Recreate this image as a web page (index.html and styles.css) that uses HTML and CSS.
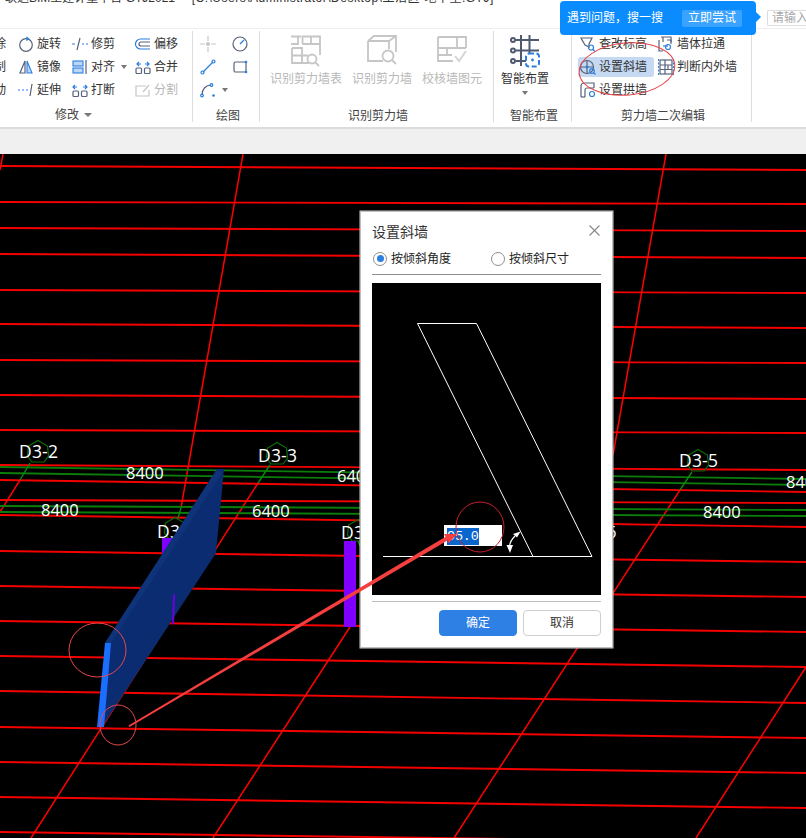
FILE: index.html
```html
<!DOCTYPE html>
<html lang="zh-CN">
<head>
<meta charset="utf-8">
<title>设置斜墙</title>
<link rel="stylesheet" href="styles.css">
</head>
<body>
<div class="page">
  <header class="titlebar">
    <div class="title">广联达BIM土建计量平台 GTJ2021 - <span class="title-path">[C:\Users\Administrator\Desktop\工活区-地下室.GTJ]</span></div>
    <div class="search">请输入</div>
  </header>

  <section class="ribbon">
    <div class="group g-modify">
      <div class="tools tools-modify">
        <div class="tool"><span class="ico"></span>删除</div>
        <div class="tool"><svg class="ico" viewBox="0 0 16 16"><circle class="ink" cx="8" cy="9" r="6.300"/><path class="blue" d="M8 2.800h2M8.500 1l2 1.800-2 1.800"/></svg>旋转</div>
        <div class="tool"><svg class="ico" viewBox="0 0 16 16"><path class="blue" d="M0 8h3M10 8h2M14 8h2"/><path class="ink" d="M5 14L8 2"/></svg>修剪</div>
        <div class="tool"><svg class="ico" viewBox="0 0 16 16"><path class="blue" d="M15 3H5.500a4.500 4.500 0 0 0 0 10H15"/><path class="ink" d="M15 6H6a2 2 0 0 0 0 4h9"/></svg>偏移</div>

        <div class="tool"><span class="ico"></span>复制</div>
        <div class="tool"><svg class="ico" viewBox="0 0 16 16"><path class="ink" d="M7 2L2 14h5z"/><path class="blue-fill" d="M9 2l5 12H9z"/></svg>镜像</div>
        <div class="tool"><svg class="ico" viewBox="0 0 16 16"><rect class="blue-fill" x="1" y="2" width="10" height="5"/><rect class="blue-fill" x="1" y="9" width="10" height="5"/><path class="ink" d="M14 1v14"/></svg>对齐<i class="caret"></i></div>
        <div class="tool"><svg class="ico" viewBox="0 0 16 16"><rect class="ink" x="1" y="9" width="5.500" height="5.500" rx="1"/><rect class="ink" x="9.500" y="9" width="5.500" height="5.500" rx="1"/><path class="blue" d="M6 5H2M4 3L2 5l2 2M10 5h4M12 3l2 2-2 2"/></svg>合并</div>

        <div class="tool"><span class="ico"></span>移动</div>
        <div class="tool"><svg class="ico" viewBox="0 0 16 16"><path class="blue" d="M0 8h2M4 8h2M8 8h2"/><path class="ink" d="M12 14l2-12"/></svg>延伸</div>
        <div class="tool"><svg class="ico" viewBox="0 0 16 16"><rect class="ink" x="1" y="9" width="5.500" height="5.500" rx="1"/><rect class="ink" x="9.500" y="9" width="5.500" height="5.500" rx="1"/><path class="blue" d="M1 5h4M3 3L1 5l2 2M15 5h-4M13 3l2 2-2 2"/></svg>打断</div>
        <div class="tool off"><svg class="ico" viewBox="0 0 16 16"><path class="off-line" d="M11 4H1v10h13V8M8 10l6-7"/></svg>分割</div>
      </div>
      <div class="group-label label-modify">修改<i class="caret caret-label"></i></div>
    </div>

    <div class="group g-draw">
      <div class="tools tools-draw">
        <svg class="ico" viewBox="0 0 16 16"><path class="off-line" d="M8 0v5M8 11v5M0 8h5M11 8h5"/><circle class="off-dot" cx="8" cy="8" r="2"/></svg>
        <svg class="ico" viewBox="0 0 16 16"><circle class="ink" cx="8" cy="8" r="7"/><path class="blue" d="M8 8l4-4"/></svg>
        <svg class="ico" viewBox="0 0 16 16"><path class="blue" d="M3 13L13 3"/><circle class="blue" cx="2.500" cy="13.500" r="1.500"/><circle class="blue" cx="13.500" cy="2.500" r="1.500"/></svg>
        <svg class="ico" viewBox="0 0 16 16"><rect class="ink" x="2" y="3" width="12" height="10" rx="1.500"/><circle class="dot" cx="14" cy="3" r="1.300"/><circle class="dot" cx="14" cy="13" r="1.300"/></svg>
        <div class="tool-arc"><svg class="ico" viewBox="0 0 16 16"><path class="ink" d="M2 13C2 7 6 3 11 3"/><circle class="blue" cx="2" cy="13.500" r="1.300"/><circle class="blue" cx="11.500" cy="3" r="1.300"/><circle class="dot" cx="13.500" cy="13.500" r="1.300"/></svg><i class="caret"></i></div>
      </div>
      <div class="group-label label-draw">绘图</div>
    </div>

    <div class="group g-recognize">
      <div class="bigs">
        <div class="big big-a off"><svg class="big-ico" viewBox="0 0 30 32"><path class="off-line" d="M0 1.500h10M7 1.500V9H0M11.500 9V1.500H29V20M20 1.500V9M11.500 9H29M1 13v15h17M1 13h10v15M1 20.500h16"/><circle class="off-line" cx="21" cy="24" r="4.500"/><path class="off-line" d="M24.500 27.500L28 31"/></svg>识别剪力墙表</div>
        <div class="big big-b off"><svg class="big-ico" viewBox="0 0 30 32"><path class="off-line" d="M1 6v20h15M1 6h21v8M1 6l6-5h22v16M22 6l7-5"/><circle class="off-line" cx="21" cy="21" r="5.500"/><path class="off-line" d="M25 25l4 4"/></svg>识别剪力墙</div>
        <div class="big big-b off"><svg class="big-ico" viewBox="0 0 30 32"><path class="off-line" d="M1 2h28v11M1 2v24h15M1 13h28M20 2v11M10 13v7M1 20h14"/><path class="off-check" d="M18 21l4 5 7-10"/></svg>校核墙图元</div>
      </div>
      <div class="group-label">识别剪力墙</div>
    </div>

    <div class="group g-smart">
      <div class="bigs">
        <div class="big big-c"><svg class="big-ico" viewBox="0 0 30 32"><path class="ink-bold" d="M6 5h23M6 15.500h23M6 26h10M11 0v31M19.500 0v18"/><circle class="ink-bold" cx="3" cy="5" r="2"/><circle class="ink-bold" cx="3" cy="15.500" r="2"/><circle class="ink-bold" cx="3" cy="26" r="2"/><rect class="blue-dash" x="16" y="18.500" width="13" height="13" rx="3"/><circle class="dot" cx="22.500" cy="25" r="1.400"/></svg>智能布置<i class="caret caret-big"></i></div>
      </div>
      <div class="group-label">智能布置</div>
    </div>

    <div class="group g-edit">
      <div class="tools tools-edit">
        <div class="tool"><svg class="ico" viewBox="0 0 16 16"><path class="ink" d="M1 2h11l-3 6v3L5 9z"/><circle class="blue" cx="11" cy="11.500" r="2.500"/><path class="blue" d="M13 13.500l2 2"/></svg>查改标高</div>
        <div class="tool"><svg class="ico" viewBox="0 0 16 16"><path class="ink" d="M3 1h10v5"/><path class="ink" d="M5 1v5M1 4v11h4"/><path class="ink" d="M9 4h4v4"/><path class="blue" d="M5 10h5"/><circle class="blue" cx="10" cy="11" r="2.500"/></svg>墙体拉通</div>
        <div class="tool active"><svg class="ico" viewBox="0 0 16 16"><circle class="ink" cx="7" cy="8" r="6.500"/><path class="ink" d="M7 1.500v13M.5 8h13"/><circle class="dot" cx="7" cy="8" r="1.500"/><circle class="blue" cx="12" cy="12" r="2.300"/><path class="blue" d="M14 14l1.500 1.500"/></svg>设置斜墙</div>
        <div class="tool"><svg class="ico" viewBox="0 0 16 16"><rect class="ink" x="2" y="1" width="12" height="14"/><path class="ink" d="M2 6h12M2 10.500h12M7 1v14M10 6v4.500"/><path class="blue-d" d="M.5 0v16M15.500 0v16"/></svg>判断内外墙</div>
        <div class="tool"><svg class="ico" viewBox="0 0 16 16"><path class="ink" d="M1 15V4a3 3 0 0 1 3-3h10v5M5 15V8a2 2 0 0 1 2-2h7"/><path class="ink" d="M1 15h4"/><circle class="blue" cx="12" cy="12" r="2.500"/></svg>设置拱墙</div>
      </div>
      <div class="group-label">剪力墙二次编辑</div>
    </div>
  </section>

  <div class="strip"></div>

  <main class="canvas">
    <svg class="scene" viewBox="0 154 806 684">
      <defs>
        <polygon id="tag" class="hex" points="0,-11.500 9.500,-6 10.500,4 6,10 -6,10 -10.500,4 -9.500,-6"/>
      </defs>
      <path class="grid" d="M0 166L806 170M0 202L806 204M0 228L806 231M0 254L806 258M0 290L806 293M0 324L806 328M0 360L806 363M0 395L806 399M0 430L806 433M0 465L806 470M0 480L806 492M0 500L806 503M0 515L806 527M0 551L806 562M0 586L806 597M0 621L806 632M0 656L806 667M0 691L806 703M0 727L806 738M0 762L806 773M0 797L806 808M0 832L806 843"/>
      <path class="axis" d="M243 154L181 508M3 154L0 170M666 154L613 455M258 483L31 838M20 480L0 512M680 490L454 838M350 627L213 838M806 667L696 838"/>
      <path class="green" d="M0 467L806 479M0 473L806 485M0 506L806 510M0 512L806 516"/>
      <path class="stem" d="M30 463L20 480M270 465L258 483M692 472L680 490M181 508L178 518M358 541L360 546"/>
      <use href="#tag" x="38" y="452"/>
      <use href="#tag" x="277" y="454"/>
      <use href="#tag" x="698" y="461"/>
      <use href="#tag" x="175" y="529"/>
      <use href="#tag" x="358" y="531"/>
      <text class="cad tag" x="19" y="458">D3-2</text>
      <text class="cad" x="126" y="479">8400</text>
      <text class="cad" x="41" y="516">8400</text>
      <text class="cad tag" x="258" y="462">D3-3</text>
      <text class="cad" x="337" y="482">6400</text>
      <text class="cad" x="252" y="517">6400</text>
      <text class="cad tag" x="157" y="538">D3-4</text>
      <text class="cad tag" x="341" y="539">D3-5</text>
      <text class="cad tag" x="679" y="467">D3-5</text>
      <text class="cad" x="786" y="488">8400</text>
      <text class="cad" x="703" y="518">8400</text>
      <text class="cad" x="607" y="538">6</text>
      <rect class="column" x="162" y="538" width="12" height="16"/>
      <rect class="column" x="344" y="541" width="12" height="86"/>
      <polygon class="wall" points="217,469 224,469 216,553 102,727 105,643"/>
      <polygon class="wall-top" points="217,469 222,473 111,643 105,643"/>
      <polygon class="column-dark" points="172,624 174,624 175,593 173,596"/>
      <polygon class="wall-end" points="105,643 111,643 104,727 97,727"/>
    </svg>

    <div class="dialog">
      <div class="dialog-head">
        <span class="dialog-title">设置斜墙</span>
        <svg class="close" viewBox="0 0 11 11"><path d="M.5.500l10 10M10.500.500l-10 10"/></svg>
      </div>
      <div class="radios">
        <label class="radio"><i class="radio-mark checked"></i>按倾斜角度</label>
        <label class="radio"><i class="radio-mark"></i>按倾斜尺寸</label>
      </div>
      <div class="preview">
        <svg class="preview-art" viewBox="0 0 229 312">
          <path class="wire" d="M45.500 40.500H104.500L220 273.500H11M45.500 40.500L161 273.500"/>
          <path class="wire-arc" d="M137.500 263C138 259 140 256 143 253"/>
          <path class="wire-fill" d="M134.500 262h6.500l-3 8zM141 251l7.500-2.500-3.500 6z"/>
        </svg>
        <div class="angle"><span class="angle-value">95.0</span></div>
      </div>
      <div class="dialog-foot">
        <button class="btn primary">确定</button>
        <button class="btn">取消</button>
      </div>
    </div>
  </main>

  <div class="bubble">
    <span class="bubble-text">遇到问题，搜一搜</span>
    <span class="bubble-btn">立即尝试</span>
  </div>

  <svg class="marks" viewBox="0 0 806 838">
    <ellipse class="ring" cx="627" cy="69" rx="48" ry="26" transform="rotate(-5 627 69)"/>
    <ellipse class="ring" cx="97.500" cy="650" rx="28.500" ry="27"/>
    <ellipse class="ring" cx="118" cy="725" rx="18" ry="20"/>
    <ellipse class="ring dark" cx="480" cy="527" rx="24" ry="25"/>
    <polygon class="arrow" points="128.500,725.500 129.500,727 447.500,540.500 446,536.500"/>
    <polygon class="arrow" points="457,534 444,534 449,543"/>
  </svg>
</div>
</body>
</html>
```
FILE: styles.css
```css
* { box-sizing: border-box; }
html, body { margin: 0; padding: 0; }
body {
  width: 806px;
  height: 838px;
  overflow: hidden;
  background: #fff;
  color: #3a3a3a;
  font: 12px/16px "Liberation Sans", "Noto Sans CJK SC", sans-serif;
}
i { font-style: normal; }

.page {
  position: relative;
  width: 806px;
  height: 838px;
  display: flex;
  flex-direction: column;
  overflow: hidden;
}

/* title bar */
.titlebar {
  flex: 0 0 29px;
  display: flex;
  justify-content: space-between;
  border-bottom: 1px solid #eeeeee;
  overflow: hidden;
}
.title {
  margin: -10px 0 0 -7px;
  white-space: nowrap;
  color: #333;
  line-height: 16px;
}
.title-path { margin-left: 6px; letter-spacing: .5px; }
.search {
  flex: 0 0 39px;
  margin-top: 10px;
  height: 16px;
  padding-left: 4px;
  border: 1px solid #dcdcdc;
  border-right: 0;
  border-radius: 2px 0 0 2px;
  color: #a8a8a8;
  line-height: 14px;
  white-space: nowrap;
  overflow: hidden;
}

/* ribbon */
.ribbon {
  flex: 0 0 100px;
  display: flex;
  padding-top: 2px;
  border-bottom: 2px solid #dcdcdc;
}
.group {
  flex: none;
  height: 91px;
  display: flex;
  flex-direction: column;
  border-right: 1px solid #dddddd;
}
.g-modify { width: 233px; margin-left: -40px; }
.g-draw { width: 67px; }
.g-recognize { width: 234px; }
.g-smart { width: 78px; }
.g-edit { width: 180px; }

.group-label {
  margin-top: auto;
  height: 15px;
  padding-left: 3px;
  line-height: 18px;
  text-align: center;
  color: #444;
  white-space: nowrap;
}
.label-modify { padding: 0 5px 0 0; line-height: 16px; }
.label-draw { padding-left: 4px; }

.tools {
  display: grid;
  grid-auto-rows: 23px;
  padding-top: 1px;
}
.tools-modify {
  grid-template-columns: 55px 54px 63px 57px;
  padding-left: 3px;
}
.tools-draw {
  grid-template-columns: 32px 18px;
  padding-left: 7px;
  align-items: center;
}
.tools-edit {
  grid-template-columns: 78px 92px;
  padding-left: 6px;
}
.tool {
  display: flex;
  align-items: center;
  gap: 3px;
  color: #333;
  white-space: nowrap;
}
.tools-edit .tool { padding-left: 2px; height: 20px; align-self: center; }
.tool.active { width: 76px; background: #c5daf2; border-radius: 3px; }
.tool.off, .big.off { color: #b8b8b8; }
.tool-arc { display: flex; align-items: center; gap: 3px; grid-column: 1 / 3; }

.ico {
  flex: none;
  display: block;
  width: 16px;
  height: 16px;
  overflow: visible;
}
.caret {
  display: inline-block;
  width: 0;
  height: 0;
  margin-left: 3px;
  border: 3.500px solid transparent;
  border-top: 4px solid #777;
  border-bottom: 0;
}
.caret-label { margin-left: 5px; vertical-align: 2px; border-left-width: 4px; border-right-width: 4px; }
.caret-big { display: block; margin: 4px auto 0; }

.bigs {
  display: flex;
  gap: 10px;
  padding: 4px 0 0 10px;
}
.g-smart .bigs { padding-left: 7px; }
.big {
  display: flex;
  flex-direction: column;
  align-items: center;
  white-space: nowrap;
}
.big-a { width: 72px; }
.big-b { width: 60px; }
.big-c { width: 48px; color: #333; }
.big-ico {
  display: block;
  width: 30px;
  height: 32px;
  margin-bottom: 4px;
  overflow: visible;
}

/* icon strokes */
.ink { fill: none; stroke: #56617a; stroke-width: 1.200; }
.ink-bold { fill: none; stroke: #4f5a70; stroke-width: 2; }
.blue { fill: none; stroke: #2b7fe0; stroke-width: 1.200; }
.blue-d { fill: none; stroke: #2b7fe0; stroke-width: 1; stroke-dasharray: 2 1.500; }
.blue-dash { fill: none; stroke: #2b7fe0; stroke-width: 2; stroke-dasharray: 5 2.500; }
.blue-fill { fill: #bcd7f5; stroke: #2b7fe0; stroke-width: 1.100; }
.dot { fill: #2b7fe0; }
.off-line { fill: none; stroke: #c6c6c6; stroke-width: 1.800; }
.off-check { fill: none; stroke: #d5d5d5; stroke-width: 2; }
.off-dot { fill: #c6c6c6; }
.tools-draw .off-line, .tool.off .off-line { stroke-width: 1.200; }

.strip { flex: 0 0 25px; background: #f0f0f0; }

/* CAD canvas */
.canvas {
  position: relative;
  flex: 1;
  background: #000;
  overflow: hidden;
}
.scene {
  position: absolute;
  inset: 0;
  width: 806px;
  height: 684px;
}
.grid { fill: none; stroke: #f40000; stroke-width: 1.900; }
.axis { fill: none; stroke: #ff0000; stroke-width: 1.500; }
.green { fill: none; stroke: #0a7d0a; stroke-width: 1.800; }
.stem { fill: none; stroke: #0a8a0a; stroke-width: 1.400; }
.hex { fill: none; stroke: #0a6f0a; stroke-width: 1.200; }
.cad {
  fill: #ffffff;
  font-family: "Open Sans", "Liberation Sans", sans-serif;
  font-size: 16.500px;
}
.cad.tag { font-size: 17.500px; letter-spacing: .2px; }
.column { fill: #8000ff; }
.column-dark { fill: #7000e0; }
.wall { fill: #0b2c70; }
.wall-top { fill: #0f3379; }
.wall-end { fill: #1a6fff; }

/* dialog */
.dialog {
  position: absolute;
  left: 360px;
  top: 57px;
  width: 253px;
  height: 437px;
  padding: 0 11px;
  background: #fff;
  border: 1px solid #bfbfbf;
  box-shadow: 0 0 0 .5px #d0d0d0;
}
.dialog-head {
  height: 38px;
  display: flex;
  align-items: center;
  justify-content: space-between;
}
.dialog-title { margin-top: 1px; font-size: 14px; color: #333; }
.close { width: 11px; height: 11px; margin: -2px 1px 0 0; }
.close path { fill: none; stroke: #8a8a8a; stroke-width: 1.200; }
.radios {
  display: grid;
  grid-template-columns: 118px auto;
  height: 25px;
  padding: 0 0 7px 1px;
  border-bottom: 1px solid #8c8c8c;
}
.radio {
  display: flex;
  align-items: center;
  gap: 4px;
  color: #222;
}
.radio-mark {
  position: relative;
  display: block;
  width: 14px;
  height: 14px;
  border: 1px solid #8f8f8f;
  border-radius: 50%;
}
.radio-mark.checked::after {
  content: "";
  position: absolute;
  left: 2.500px;
  top: 2.500px;
  width: 7px;
  height: 7px;
  border-radius: 50%;
  background: #2b7fe0;
}
.preview {
  position: relative;
  height: 312px;
  margin-top: 8px;
  background: #000;
}
.preview-art { display: block; width: 229px; height: 312px; }
.wire { fill: none; stroke: #fff; stroke-width: 1; }
.wire-arc { fill: none; stroke: #fff; stroke-width: 1.200; }
.wire-fill { fill: #fff; }
.angle {
  position: absolute;
  left: 72px;
  top: 242px;
  width: 58px;
  height: 21px;
  padding: 3px 0 0 3px;
  background: #fff;
}
.angle-value {
  display: block;
  width: 32px;
  height: 17px;
  background: #0a66cc;
  color: #fff;
  font: 13.500px/17px "Liberation Mono", monospace;
  letter-spacing: -.2px;
}
.dialog-foot {
  display: flex;
  justify-content: flex-end;
  gap: 6px;
  margin-top: 6px;
  padding-top: 8px;
  border-top: 1px solid #bdbdbd;
}
.btn {
  width: 78px;
  height: 26px;
  padding: 0;
  border: 1px solid #cfcfcf;
  border-radius: 4px;
  background: #fff;
  color: #333;
  font: inherit;
}
.btn.primary { background: #2f80e4; border-color: #2f80e4; color: #fff; }

/* tip bubble */
.bubble {
  position: absolute;
  left: 560px;
  top: 1px;
  width: 196px;
  height: 34px;
  display: flex;
  align-items: center;
  padding-left: 7px;
  background: #0a8cff;
  border-radius: 4px;
  color: #fff;
}
.bubble::after {
  content: "";
  position: absolute;
  right: -5px;
  top: 11px;
  border-left: 5px solid #0a8cff;
  border-top: 5px solid transparent;
  border-bottom: 5px solid transparent;
}
.bubble-text { width: 115px; white-space: nowrap; }
.bubble-btn {
  width: 60px;
  height: 17px;
  line-height: 17px;
  text-align: center;
  background: #3aa3ff;
  border-radius: 2px;
}

/* hand-drawn annotations */
.marks {
  position: absolute;
  left: 0;
  top: 0;
  width: 806px;
  height: 838px;
  pointer-events: none;
}
.ring { fill: none; stroke: #e8474c; stroke-width: 1; }
.ring.dark { stroke: #c8202c; }
.arrow { fill: #f53e3e; }
```
